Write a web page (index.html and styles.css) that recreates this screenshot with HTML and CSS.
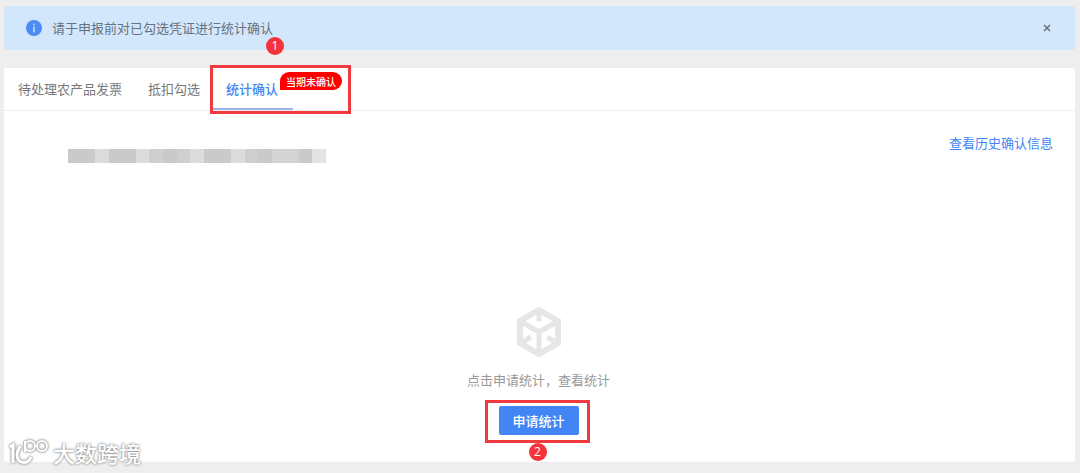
FILE: index.html
```html
<!DOCTYPE html>
<html lang="zh-CN">
<head>
    <meta charset="UTF-8">
    <meta name="viewport" content="width=device-width, initial-scale=1.0">
    <title>统计确认</title>
    <link rel="stylesheet" href="styles.css">
</head>
<body>
    <div class="alert">
        <svg class="alert-icon" viewBox="0 0 16 16">
            <circle cx="8" cy="8" r="8" fill="#4a8cf5"/>
            <path d="M7.3 3.6h1.4v1.6H7.3zM7.3 6.5h1.4v6H7.3z" fill="#d3e7fc"/>
        </svg>
        <span class="alert-text">请于申报前对已勾选凭证进行统计确认</span>
        <button class="close" type="button" aria-label="关闭">
            <svg viewBox="0 0 8 8"><path d="M1 1l6 6M7 1l-6 6" stroke="#66707a" stroke-width="1.5"/></svg>
        </button>
    </div>

    <div class="panel">
        <div class="tabs">
            <a class="tab" href="#">待处理农产品发票</a>
            <a class="tab" href="#">抵扣勾选</a>
            <a class="tab active" href="#">统计确认
                <span class="badge">当期未确认</span>
                <span class="mark mark-tab"></span>
                <span class="step step-tab">1</span>
            </a>
        </div>

        <div class="info">
            <div class="mosaic">
                <i class="d"></i><i class="d"></i><i class="l"></i><i class="d"></i><i class="d"></i><i class="l"></i><i class="m"></i><i class="d"></i><i class="m"></i><i class="l"></i><i class="d"></i><i class="d"></i><i class="l"></i><i class="m"></i><i class="d"></i><i class="n"></i><i class="n"></i><i class="d"></i><i class="e"></i>
            </div>
            <a class="history" href="#">查看历史确认信息</a>
        </div>

        <div class="empty">
            <svg class="cube" viewBox="0 0 44 50">
                <g fill="none" stroke="#e6e6e6" stroke-width="6">
                    <path d="M22 3L41 14v22L22 47 3 36V14z"/>
                    <path d="M3 14l19 11 19-11M22 25v21" stroke-width="5"/>
                    <path d="M22 4v10M4 36l10-6M40 36l-10-6" stroke-width="5"/>
                </g>
            </svg>
            <p class="tip">点击申请统计，查看统计</p>
            <div class="apply">
                <button class="btn" type="button">申请统计</button>
                <span class="mark mark-btn"></span>
                <span class="step step-btn">2</span>
            </div>
        </div>

        <div class="watermark">
            <svg class="logo" viewBox="0 0 40 28">
                <g fill="none" stroke="#fff" stroke-width="3">
                    <path d="M1 9l3-2v18"/>
                    <path d="M11 8c-1 3-3 5-3 9 0 9 11 10 14 2"/>
                    <path d="M16 3v11" stroke-width="2"/>
                    <circle cx="21" cy="8" r="5" stroke-width="2"/>
                    <circle cx="33" cy="8" r="5" stroke-width="2"/>
                </g>
            </svg>
            <span>大数跨境</span>
        </div>
    </div>
</body>
</html>
```

FILE: styles.css
```css
* {
    box-sizing: border-box;
}
html {
    background-color: #eeeeee;
}
body {
    margin: 0;
    padding: 6px 5px 11px 4px;
    font-family: "Noto Sans CJK SC", sans-serif;
    font-size: 13px;
    font-weight: 400;
    line-height: 20px;
    color: #777;
}
a {
    text-decoration: none;
    color: inherit;
}
.alert {
    display: flex;
    align-items: center;
    height: 44px;
    padding: 0 24px 0 22px;
    background-color: #d3e7fc;
    border-radius: 3px;
}
.alert-icon {
    width: 16px;
    height: 16px;
    margin-right: 10px;
}
.alert-text {
    flex: 1;
    color: #66727e;
}
.close {
    display: flex;
    padding: 0;
    border: none;
    background: none;
}
.close svg {
    width: 8px;
    height: 8px;
}
.panel {
    position: relative;
    margin-top: 18px;
    padding-bottom: 27px;
    background-color: #fff;
    border-radius: 3px;
}
.tabs {
    display: flex;
    height: 43px;
    padding-left: 1px;
    border-bottom: 1px solid #eeeeee;
}
.tab {
    padding: 0 13px;
    line-height: 42px;
}
.active {
    position: relative;
    padding-right: 15px;
    color: #4285f4;
    font-weight: 500;
    border-bottom: 2px solid #9db5ea;
}
.badge {
    position: absolute;
    left: 67px;
    top: 4px;
    width: 62px;
    height: 18px;
    border-radius: 9px 9px 9px 0;
    background-color: #ff0000;
    color: #fff;
    font-size: 10px;
    line-height: 20px;
    text-align: center;
    white-space: nowrap;
}
/* red frames and numbered steps */
.mark {
    position: absolute;
    border: 3px solid #ef3b3f;
}
.mark-tab {
    left: -3px;
    top: -3px;
    width: 141px;
    height: 49px;
}
.mark-btn {
    left: -14px;
    top: -6px;
    width: 105px;
    height: 43px;
}
.step {
    position: absolute;
    width: 18px;
    height: 18px;
    border-radius: 50%;
    background-color: #f5333a;
    color: #fff;
    font-family: "Open Sans", sans-serif;
    font-size: 12px;
    font-weight: 400;
    line-height: 18px;
    text-align: center;
}
.step-tab {
    left: 53px;
    top: -31px;
}
.step-btn {
    left: 30px;
    top: 37px;
}
.info {
    display: flex;
    justify-content: space-between;
    align-items: flex-start;
    padding: 22px 22px 0 64px;
}
.mosaic {
    display: flex;
    width: 258px;
    height: 14px;
    margin-top: 16px;
}
.mosaic i {
    flex: 1;
}
.d { background-color: #cacaca; }
.m { background-color: #cfcfcf; }
.n { background-color: #d4d4d4; }
.l { background-color: #dcdcdc; }
.e { background-color: #e4e4e4; }
.history {
    color: #4285f4;
}
.empty {
    display: flex;
    flex-direction: column;
    align-items: center;
    margin-top: 144px;
    padding-right: 2px;
}
.cube {
    width: 44px;
    height: 50px;
}
.tip {
    margin: 13px 0 16px;
    color: #999;
}
.apply {
    position: relative;
}
.btn {
    display: block;
    width: 80px;
    height: 29px;
    padding: 0;
    border: none;
    border-radius: 2px;
    background-color: #4285f4;
    color: #fff;
    font-family: inherit;
    font-size: 13px;
    font-weight: 500;
}
.watermark {
    position: absolute;
    left: 5px;
    bottom: -6px;
    display: flex;
    align-items: center;
    color: #fff;
    font-size: 22px;
    font-weight: 500;
    line-height: 32px;
    text-shadow: 0 0 2px #888, 0 0 3px #999;
}
.logo {
    width: 40px;
    height: 28px;
    margin-right: 4px;
    overflow: visible;
    filter: drop-shadow(0 0 1px #888) drop-shadow(0 0 1px #bbb);
}
```
